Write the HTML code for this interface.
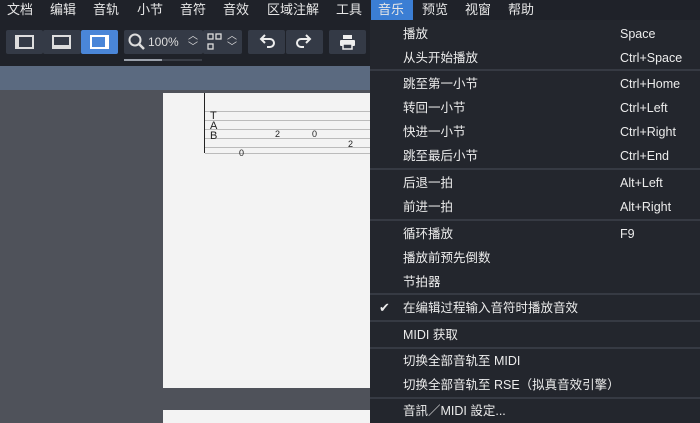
<!DOCTYPE html>
<html><head><meta charset="utf-8"><style>
*{margin:0;padding:0;box-sizing:border-box}
body{width:700px;height:423px;overflow:hidden;background:#4f525a;font-family:"Liberation Sans","Noto Sans CJK SC",sans-serif;position:relative}
.mb{position:absolute;left:0;top:0;width:700px;height:20px;background:#1f2229;color:#e6e6e6;font-size:13px}
.mb span{position:absolute;top:3px;line-height:14px}
.tb{position:absolute;left:0;top:20px;width:700px;height:46px;background:#1f2229}
.btn{position:absolute;top:30px;height:24px;background:#343a46;border-radius:2px}
.band{position:absolute;left:0;top:66px;width:700px;height:24px;background:#5b6a80}
.page{position:absolute;left:163px;width:207px;background:#f3f3f3}
.menu{position:absolute;left:370px;top:20px;width:330px;height:403px;background:#23262d;color:#ececec;font-size:12.5px}
.it{position:absolute;left:33px;white-space:nowrap;line-height:14px}
.sc{position:absolute;left:250px;white-space:nowrap;line-height:14px}
.sep{position:absolute;left:0;width:330px;height:2px;background:#363a43}
.ln{position:absolute;left:205px;width:165px;height:1px;background:#bbb}
.n{position:absolute;font-size:9px;color:#222;line-height:10px}
</style></head><body>
<div class="mb">
<span style="left:7px">文档</span><span style="left:50px">编辑</span><span style="left:93px">音轨</span><span style="left:137px">小节</span><span style="left:180px">音符</span><span style="left:223px">音效</span><span style="left:267px">区域注解</span><span style="left:336px">工具</span>
<span style="left:371px;top:0;height:20px;width:42px;background:#3b7ed4;padding:3px 0 0 7px">音乐</span>
<span style="left:422px">预览</span><span style="left:465px">视窗</span><span style="left:508px">帮助</span>
</div>
<div class="tb"></div>
<div class="btn" style="left:6px;width:37px"><div style="position:absolute;left:9px;top:5px;width:19px;height:14px;border:2px solid #ddd;border-left-width:4px"></div></div>
<div class="btn" style="left:43px;width:38px"><div style="position:absolute;left:9px;top:5px;width:19px;height:14px;border:2px solid #ddd;border-bottom-width:4px"></div></div>
<div class="btn" style="left:81px;width:37px;background:#4a86d8"><div style="position:absolute;left:9px;top:5px;width:19px;height:14px;border:2px solid #fff;border-right-width:4px"></div></div>
<div class="btn" style="left:124px;width:79px;color:#ddd;font-size:12px"><svg style="position:absolute;left:3px;top:2px" width="20" height="20"><circle cx="8" cy="8" r="5.5" fill="none" stroke="#ddd" stroke-width="2"/><line x1="12" y1="12" x2="17" y2="17" stroke="#ddd" stroke-width="2.5"/></svg><span style="position:absolute;left:24px;top:5px;line-height:14px">100%</span><span style="position:absolute;left:64px;top:1px;font-size:10px;line-height:11px">︿<br>﹀</span></div>
<div class="btn" style="left:203px;width:39px"><svg style="position:absolute;left:4px;top:3px" width="16" height="18" fill="none" stroke="#ddd" stroke-width="1.3"><rect x="1" y="1" width="5" height="5"/><rect x="9" y="1" width="5" height="5"/><rect x="1" y="11" width="5" height="5"/></svg><span style="position:absolute;left:24px;top:1px;font-size:10px;line-height:11px;color:#ddd">︿<br>﹀</span></div>
<div style="position:absolute;left:124px;top:59px;width:78px;height:2px;background:#3a3e47"></div>
<div style="position:absolute;left:124px;top:59px;width:38px;height:2px;background:#9aa0aa"></div>
<div class="btn" style="left:248px;width:37px"><svg style="position:absolute;left:9px;top:4px" width="20" height="16" fill="none" stroke="#eee" stroke-width="2"><path d="M5 5h8a4 4 0 0 1 0 8h-3"/><path d="M8 1L4 5l4 4"/></svg></div>
<div class="btn" style="left:286px;width:37px"><svg style="position:absolute;left:8px;top:4px" width="20" height="16" fill="none" stroke="#eee" stroke-width="2"><path d="M15 5H7a4 4 0 0 0 0 8h3"/><path d="M12 1l4 4-4 4"/></svg></div>
<div class="btn" style="left:329px;width:37px"><svg style="position:absolute;left:10px;top:4px" width="18" height="16" fill="#eee"><rect x="4" y="1" width="9" height="4"/><rect x="1" y="6" width="15" height="6" rx="1"/><rect x="4" y="10" width="9" height="5" fill="#343a46" stroke="#eee" stroke-width="1.5"/></svg></div>
<div class="band"></div>
<div class="page" style="top:93px;height:295px"></div>
<div class="page" style="top:410px;height:13px"></div>
<div style="position:absolute;left:204px;top:93px;width:1px;height:60px;background:#222"></div>
<div class="ln" style="top:111px"></div><div class="ln" style="top:120px"></div><div class="ln" style="top:129px"></div><div class="ln" style="top:138px"></div><div class="ln" style="top:147px"></div><div class="ln" style="top:153px"></div>
<div style="position:absolute;left:210px;top:111px;font-size:11px;line-height:10px;color:#222">T<br>A<br>B</div>
<div class="n" style="left:239px;top:148px">0</div><div class="n" style="left:275px;top:129px">2</div><div class="n" style="left:312px;top:129px">0</div><div class="n" style="left:348px;top:139px">2</div>
<div class="menu">
<div class="it" style="top:7px">播放</div><div class="sc" style="top:7px">Space</div>
<div class="it" style="top:31px">从头开始播放</div><div class="sc" style="top:31px">Ctrl+Space</div>
<div class="sep" style="top:49px"></div>
<div class="it" style="top:57px">跳至第一小节</div><div class="sc" style="top:57px">Ctrl+Home</div>
<div class="it" style="top:81px">转回一小节</div><div class="sc" style="top:81px">Ctrl+Left</div>
<div class="it" style="top:105px">快进一小节</div><div class="sc" style="top:105px">Ctrl+Right</div>
<div class="it" style="top:129px">跳至最后小节</div><div class="sc" style="top:129px">Ctrl+End</div>
<div class="sep" style="top:148px"></div>
<div class="it" style="top:156px">后退一拍</div><div class="sc" style="top:156px">Alt+Left</div>
<div class="it" style="top:180px">前进一拍</div><div class="sc" style="top:180px">Alt+Right</div>
<div class="sep" style="top:199px"></div>
<div class="it" style="top:207px">循环播放</div><div class="sc" style="top:207px">F9</div>
<div class="it" style="top:231px">播放前预先倒数</div>
<div class="it" style="top:255px">节拍器</div>
<div class="sep" style="top:273px"></div>
<div style="position:absolute;left:9px;top:281px;font-size:13px;line-height:14px">✔</div>
<div class="it" style="top:281px">在编辑过程输入音符时播放音效</div>
<div class="sep" style="top:300px"></div>
<div class="it" style="top:308px">MIDI 获取</div>
<div class="sep" style="top:327px"></div>
<div class="it" style="top:334px">切换全部音轨至 MIDI</div>
<div class="it" style="top:358px">切换全部音轨至 RSE（拟真音效引擎）</div>
<div class="sep" style="top:377px"></div>
<div class="it" style="top:384px">音訊／MIDI 設定...</div>
</div>
</body></html>
